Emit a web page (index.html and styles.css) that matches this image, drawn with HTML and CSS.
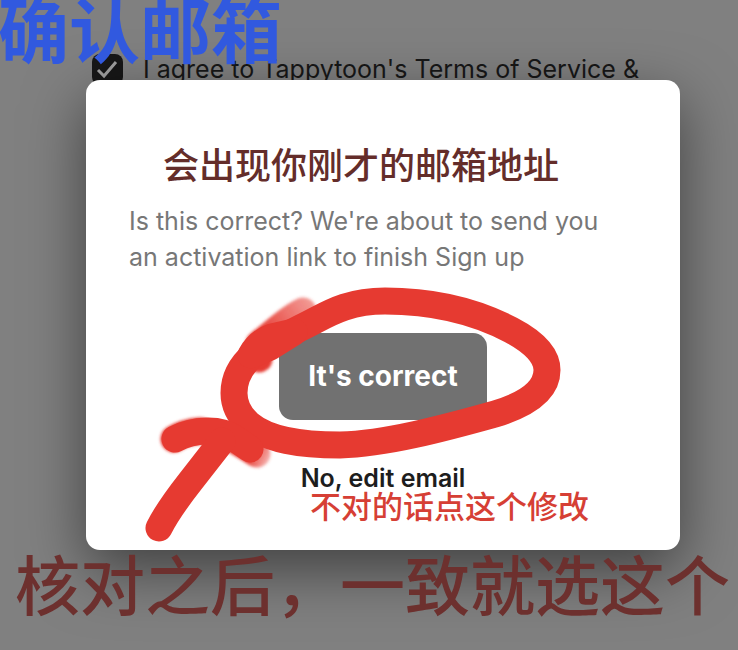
FILE: index.html
```html
<!DOCTYPE html>
<html lang="zh-CN">
<head>
<meta charset="utf-8">
<meta name="viewport" content="width=device-width, initial-scale=1">
<title>Tappytoon</title>
<link rel="stylesheet" href="styles.css">
</head>
<body>
<main class="page">
  <div class="terms">
    <input class="terms-box" type="checkbox" id="agree" checked>
    <svg class="terms-tick" viewBox="0 0 31 31" aria-hidden="true"><path d="M6 16l6 6L24 8"/></svg>
    <label for="agree">I agree to Tappytoon's Terms of Service &amp;</label>
  </div>

  <section class="dialog" role="dialog" aria-labelledby="dialog-title">
    <h1 class="dialog-title" id="dialog-title">会出现你刚才的邮箱地址</h1>
    <p class="dialog-text">Is this correct? We're about to send you<br>an activation link to finish Sign up</p>
    <div class="actions">
      <button class="confirm" type="button">It's correct</button>
      <button class="edit" type="button">No, edit email</button>
    </div>
    <p class="note note-edit">不对的话点这个修改</p>
    <svg class="marker" viewBox="86 80 594 470" aria-hidden="true">
      <defs>
        <filter id="soft" x="-20%" y="-20%" width="140%" height="140%"><feGaussianBlur stdDeviation="1.5"/></filter>
        <linearGradient id="fade" gradientUnits="userSpaceOnUse" x1="260" y1="338" x2="312" y2="300">
          <stop offset="0" stop-color="#e63a31"/>
          <stop offset="1" stop-color="#e63a31" stop-opacity=".5"/>
        </linearGradient>
        <linearGradient id="tail" gradientUnits="userSpaceOnUse" x1="252" y1="450" x2="272" y2="460">
          <stop offset="0" stop-color="#e63a31"/>
          <stop offset="1" stop-color="#e63a31" stop-opacity=".3"/>
        </linearGradient>
      </defs>
      <g class="soft">
        <path stroke="url(#fade)" d="M303 311C288 318 273 333 259 344"/>
        <path d="M260 350L259 359"/>
        <path stroke="url(#tail)" d="M236 441Q246 447 257 454"/>
        <path d="M174 439Q185 432 200 431"/>
      </g>
      <path d="M385 301C352 301 333 311 316 320C294 332 270 341 254 354C240 366 234 380 234 393C234 406 240 416 249 424C268 440 300 445 340 445C385 444 445 428 495 414C528 404 547 390 547 370C547 356 534 342 511 330C473 310 430 301 385 301Z"/>
      <path d="M251 355C256 346 264 340 272 337L294 332L270 347Z"/>
      <path d="M175 439C194 429 220 428 234 438L250 449"/>
      <path d="M159 528C168 510 179 496 190 482L222 441"/>
    </svg>
  </section>

  <p class="note note-title">确认邮箱</p>
  <p class="note note-confirm">核对之后，一致就选这个</p>
</main>
</body>
</html>
```
FILE: styles.css
```css
* { box-sizing: border-box; }

body {
  margin: 0;
  background: #808080;
  font-family: Inter, "Noto Sans CJK SC", sans-serif;
}

h1, p { margin: 0; }

.page {
  position: relative;
  min-height: 100vh;
  padding: 52px 58px 0 86px;
  overflow: hidden;
}

.terms {
  position: relative;
  display: flex;
  align-items: center;
  gap: 20px;
  height: 34px;
  padding-left: 6px;
  margin-bottom: -6px;
  color: #171717;
  font-size: 25px;
  white-space: nowrap;
}

.terms-box {
  appearance: none;
  width: 31px;
  height: 31px;
  margin: 0;
  border-radius: 8px;
  background: #171717;
}

.terms-tick {
  position: absolute;
  left: 6px;
  width: 31px;
  height: 31px;
  fill: none;
  stroke: #a0a0a0;
  stroke-width: 3;
  pointer-events: none;
}

.dialog {
  position: relative;
  min-height: 470px;
  padding: 60px 43px 50px;
  border-radius: 14px;
  background: #fff;
  box-shadow: 0 20px 60px rgba(0, 0, 0, .5);
}

.dialog-title {
  padding-left: 34px;
  color: #642d2a;
  font-size: 36px;
  font-weight: 500;
  line-height: 52px;
}

.dialog-text {
  margin-top: 11px;
  color: #777;
  font-size: 25px;
  line-height: 36px;
}

.actions {
  display: flex;
  flex-direction: column;
  align-items: center;
  gap: 40px;
  margin-top: 58px;
}

.actions button {
  border: 0;
  font-family: inherit;
  cursor: pointer;
}

.confirm {
  padding: 25px 29px;
  border-radius: 14px;
  background: #717171;
  color: #fff;
  font-size: 28px;
  font-weight: 700;
  line-height: 37px;
}

.edit {
  padding: 0;
  background: none;
  color: #1d1d1d;
  font-size: 25px;
  font-weight: 600;
  line-height: 36px;
}

.marker {
  position: absolute;
  top: 0;
  left: 0;
  width: 594px;
  height: 470px;
  fill: none;
  stroke: #e63a31;
  stroke-width: 27;
  stroke-linecap: round;
  stroke-linejoin: round;
  pointer-events: none;
}

.soft { filter: url(#soft); }

.note {
  position: absolute;
  white-space: nowrap;
}

.note-edit {
  top: 405px;
  left: 224px;
  color: #d63f35;
  font-size: 31px;
  font-weight: 500;
  line-height: 44px;
}

.note-title {
  top: -19px;
  left: -2px;
  color: #3159df;
  font-size: 71px;
  font-weight: 700;
  line-height: 100px;
}

.note-confirm {
  top: 539px;
  left: 15px;
  color: #6d302e;
  font-size: 65px;
  font-weight: 500;
  line-height: 96px;
}
```
